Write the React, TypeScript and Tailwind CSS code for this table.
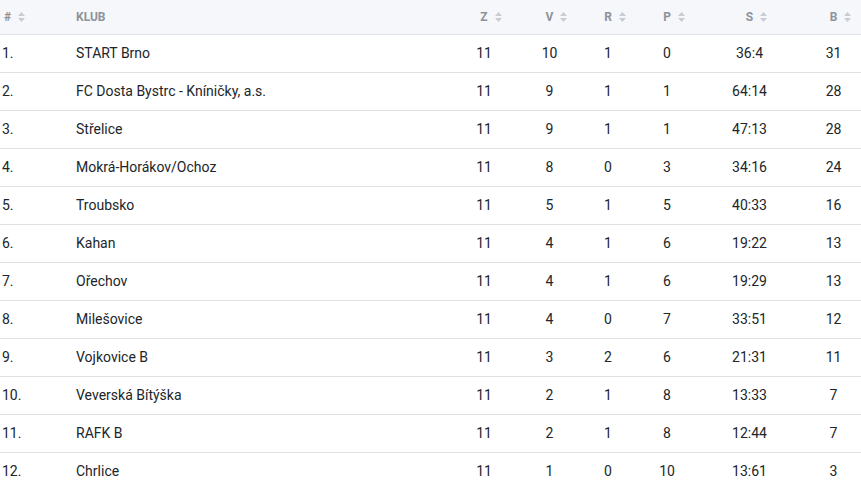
import React from "react";

const rows: [string, string, number, number, number, number, string, number][] = [
  ["1.", "START Brno", 11, 10, 1, 0, "36:4", 31],
  ["2.", "FC Dosta Bystrc - Kníničky, a.s.", 11, 9, 1, 1, "64:14", 28],
  ["3.", "Střelice", 11, 9, 1, 1, "47:13", 28],
  ["4.", "Mokrá-Horákov/Ochoz", 11, 8, 0, 3, "34:16", 24],
  ["5.", "Troubsko", 11, 5, 1, 5, "40:33", 16],
  ["6.", "Kahan", 11, 4, 1, 6, "19:22", 13],
  ["7.", "Ořechov", 11, 4, 1, 6, "19:29", 13],
  ["8.", "Milešovice", 11, 4, 0, 7, "33:51", 12],
  ["9.", "Vojkovice B", 11, 3, 2, 6, "21:31", 11],
  ["10.", "Veverská Bítýška", 11, 2, 1, 8, "13:33", 7],
  ["11.", "RAFK B", 11, 2, 1, 8, "12:44", 7],
  ["12.", "Chrlice", 11, 1, 0, 10, "13:61", 3],
];

function SortIcon() {
  return (
    <svg width="7" height="10" viewBox="0 0 7 10" className="absolute left-full top-1/2 -translate-y-1/2 ml-[7px]">
      <polygon points="0,4 3.5,0 7,4" fill="#c8cdd3" />
      <polygon points="0,6 3.5,10 7,6" fill="#c8cdd3" />
    </svg>
  );
}

function H({ label }: { label: string }) {
  return (
    <span className="relative inline-block">
      {label}
      <SortIcon />
    </span>
  );
}

const widths = ["w-[76px]", "w-[375px]", "w-[66px]", "w-[65px]", "w-[52px]", "w-[66px]", "w-[99px]", "w-[62px]"];

export default function App() {
  return (
    <div className="w-[861px] bg-white" style={{ fontFamily: "Roboto, 'Liberation Sans', sans-serif" }}>
      <div className="flex h-[35px] items-center bg-[#f5f7fa] border-b border-[#dde1e6] text-[12px] font-bold text-[#8d939b] uppercase">
        <div className={`${widths[0]} pl-[4px]`}><H label="#" /></div>
        <div className={widths[1]}>KLUB</div>
        <div className={`${widths[2]} text-center`}><H label="Z" /></div>
        <div className={`${widths[3]} text-center`}><H label="V" /></div>
        <div className={`${widths[4]} text-center`}><H label="R" /></div>
        <div className={`${widths[5]} text-center`}><H label="P" /></div>
        <div className={`${widths[6]} text-center`}><H label="S" /></div>
        <div className={`${widths[7]} text-center pl-[7px]`}><H label="B" /></div>
      </div>
      {rows.map((r) => (
        <div key={r[0]} className="flex h-[38px] items-center border-b border-[#dde1e6] text-[14px] text-[#212529]">
          <div className={`${widths[0]} pl-[2px]`}>{r[0]}</div>
          <div className={widths[1]}>{r[1]}</div>
          <div className={`${widths[2]} text-center`}>{r[2]}</div>
          <div className={`${widths[3]} text-center`}>{r[3]}</div>
          <div className={`${widths[4]} text-center`}>{r[4]}</div>
          <div className={`${widths[5]} text-center`}>{r[5]}</div>
          <div className={`${widths[6]} text-center`}>{r[6]}</div>
          <div className={`${widths[7]} text-center pl-[7px]`}>{r[7]}</div>
        </div>
      ))}
    </div>
  );
}
